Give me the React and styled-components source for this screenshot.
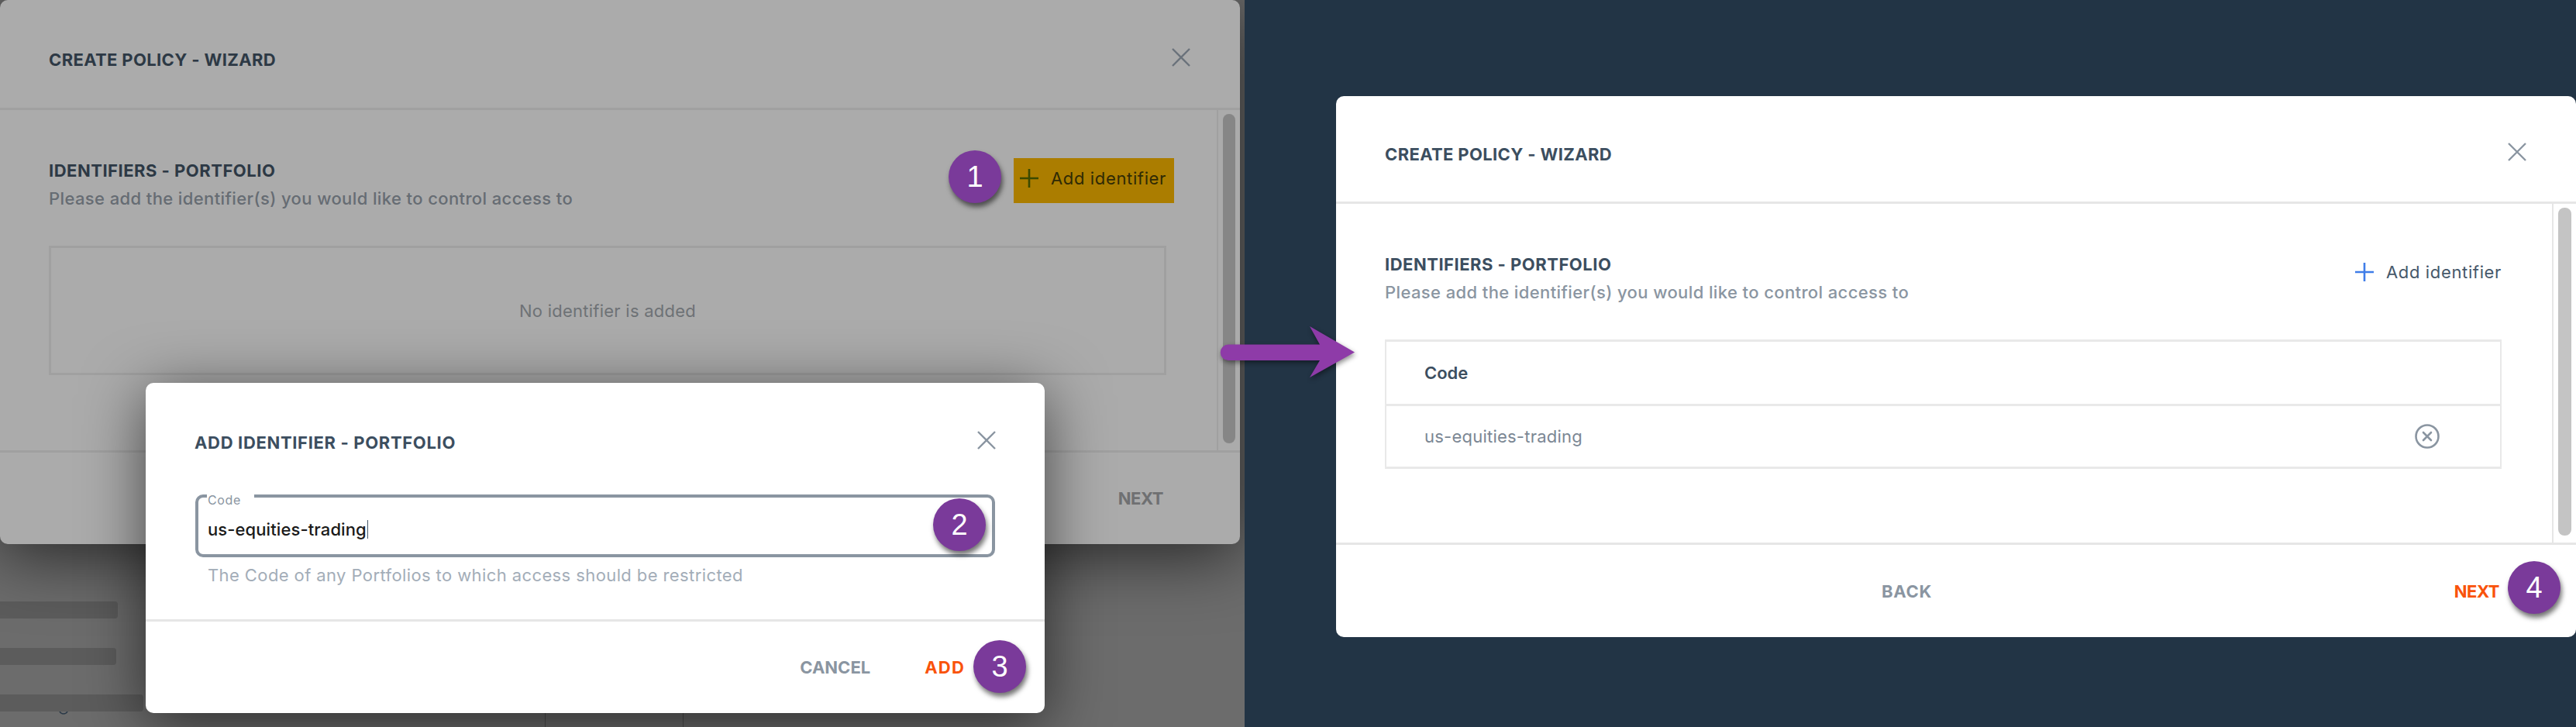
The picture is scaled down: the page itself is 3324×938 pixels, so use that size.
import styled, { createGlobalStyle } from 'styled-components'

const GlobalStyle = createGlobalStyle`
  html, body {
    margin: 0;
    overflow: hidden;
  }

  body {
    font-family: Inter, 'Open Sans', sans-serif;
  }
`

const Page = styled.div`
  display: flex;
  height: 938px;
  position: relative;
  width: 3324px;
`

const LeftPane = styled.div`
  background-color: #6c6c6c;
  flex: 0 0 1606px;
  overflow: hidden;
  position: relative;
`

const RightPane = styled.div`
  background-color: #223445;
  flex: 1;
  overflow: hidden;
  padding: 124px 0 0 118px;
`

const Wizard = styled.section`
  background-color: ${p => (p.$dim ? '#ababab' : '#fff')};
  border-radius: 10px;
  box-shadow: ${p => (p.$dim ? '0 10px 90px rgba(0, 0, 0, 0.7)' : 'none')};
  display: flex;
  flex-direction: column;
  height: ${p => (p.$dim ? '702px' : '698px')};
  position: relative;
  width: 1600px;
`

const Header = styled.header`
  align-items: center;
  border-bottom: 3px solid ${p => (p.$dim ? '#a0a0a0' : '#e6e6e6')};
  box-sizing: border-box;
  display: flex;
  flex: 0 0 ${p => p.$height}px;
  justify-content: space-between;
  padding: ${p => (p.$dim ? 9 : 8)}px 64px 0 63px;
`

const Title = styled.h2`
  color: ${p => (p.$dim ? '#2d3945' : '#3c4e5f')};
  font-size: 22px;
  font-weight: 700;
  letter-spacing: 0.36px;
  line-height: 28px;
  margin: 6px 0 0;
  white-space: nowrap;
`

const CloseMark = styled.svg`
  color: ${p => (p.$dim ? '#6a727b' : '#8a95a1')};
  display: block;
  flex: none;
  height: 24px;
  width: 24px;
`

const Body = styled.div`
  display: flex;
  flex: 1;
  min-height: 0;
`

const Content = styled.div`
  border-right: 2px solid ${p => (p.$dim ? '#a0a0a0' : '#e6e6e6')};
  box-sizing: border-box;
  flex: 0 0 ${p => (p.$dim ? 1572 : 1571)}px;
  padding: 64px 65px 0 63px;
`

const Track = styled.div`
  box-sizing: border-box;
  flex: 1;
  padding: 5px 6px 9px 6px;
`

const Thumb = styled.div`
  background-color: ${p => (p.$dim ? '#868686' : '#c4c4c4')};
  border-radius: 8px;
  height: 100%;
`

const SectionRow = styled.div`
  align-items: flex-start;
  display: flex;
  justify-content: space-between;
  margin-bottom: 47px;
`

const SectionTitle = styled.h3`
  color: ${p => (p.$dim ? '#2d3945' : '#3c4e5f')};
  font-size: 22px;
  font-weight: 700;
  letter-spacing: 0.5px;
  line-height: 28px;
  margin: 0 0 8px;
`

const SectionHint = styled.p`
  color: ${p => (p.$dim ? '#666c73' : '#8a95a1')};
  font-size: 22px;
  font-weight: 500;
  letter-spacing: 0.39px;
  line-height: 28px;
  margin: 0;
`

const AddButton = styled.button`
  align-items: center;
  background-color: ${p => (p.$highlight ? '#ab7d00' : 'transparent')};
  border: 0;
  box-sizing: border-box;
  color: ${p => (p.$highlight ? '#2f2a05' : '#46586a')};
  display: flex;
  font-family: inherit;
  font-size: 22px;
  font-weight: 400;
  gap: 16px;
  height: 58px;
  letter-spacing: 0.64px;
  margin: -2px -10px 0 0;
  padding: 0 10px 6px 8px;
  white-space: nowrap;

  svg {
    color: ${p => (p.$highlight ? '#3a4a00' : '#3f7de8')};
    display: block;
  }
`

const EmptyBox = styled.div`
  align-items: center;
  border: 3px solid #a0a0a0;
  box-sizing: border-box;
  color: #6e7276;
  display: flex;
  font-size: 22px;
  height: 167px;
  justify-content: center;
  letter-spacing: 0.25px;
`

const Table = styled.div`
  border: 3px solid #e9e9e9;
  border-width: 3px 2px;
  display: flex;
  flex-direction: column;
  font-size: 22px;
`

const TableRow = styled.div`
  align-items: center;
  box-sizing: border-box;
  border-top: ${p => (p.$head ? '0' : '3px solid #e9e9e9')};
  color: ${p => (p.$head ? '#3c4e5f' : '#7b8794')};
  display: flex;
  font-weight: ${p => (p.$head ? 600 : 400)};
  height: ${p => (p.$head ? 80 : 81)}px;
  justify-content: space-between;
  letter-spacing: ${p => (p.$head ? '0' : '0.23px')};
  padding: 0 76px 0 49px;

  svg {
    color: #8a95a1;
    display: block;
  }
`

const Footer = styled.footer`
  align-items: center;
  border-top: 3px solid ${p => (p.$dim ? '#a0a0a0' : '#e6e6e6')};
  box-sizing: border-box;
  display: flex;
  flex: 0 0 ${p => p.$height}px;
  justify-content: flex-end;
  padding: 0 99px 0 704px;
`

const Action = styled.span`
  color: ${p => p.$color};
  font-size: 22px;
  font-weight: 700;
  letter-spacing: ${p => p.$spacing}px;
  margin-right: ${p => (p.$push ? 'auto' : '0')};
  white-space: nowrap;
`

const Badge = styled.span`
  align-items: center;
  background-color: #7a3a9a;
  border-radius: 50%;
  box-shadow: 2px 5px 6px rgba(0, 0, 0, 0.55);
  color: #fff;
  display: flex;
  font-family: 'Liberation Sans', Arial, sans-serif;
  font-size: 38px;
  height: 68px;
  justify-content: center;
  left: ${p => p.$left}px;
  position: absolute;
  top: ${p => p.$top}px;
  width: 68px;
  z-index: 3;
`

const Dialog = styled.div`
  background-color: #fff;
  border-radius: 10px;
  box-shadow: 0 14px 80px rgba(0, 0, 0, 0.6);
  display: flex;
  flex-direction: column;
  height: 426px;
  left: 188px;
  position: absolute;
  top: 494px;
  width: 1160px;
  z-index: 2;
`

const DialogHeader = styled.header`
  align-items: center;
  box-sizing: border-box;
  display: flex;
  flex: 0 0 144px;
  justify-content: space-between;
  padding: 4px 63px 0 63px;
`

const DialogTitle = styled(Title)`
  color: #3c4e5f;
  letter-spacing: 0.66px;
`

const DialogBody = styled.div`
  flex: 1;
  padding: 0 64px;
`

const Field = styled.div`
  align-items: center;
  border: 4px solid #8a95a1;
  border-radius: 10px;
  box-sizing: border-box;
  color: #1a1a1a;
  display: flex;
  font-size: 22px;
  font-weight: 500;
  height: 81px;
  letter-spacing: 0.1px;
  padding: 8px 0 0 12px;
  position: relative;
`

const FieldLabel = styled.span`
  background-color: #fff;
  color: #8a95a1;
  font-size: 16px;
  font-weight: 400;
  left: 11px;
  letter-spacing: 0.6px;
  line-height: 16px;
  padding-left: 1px;
  position: absolute;
  top: -5px;
  width: 60px;
`

const Caret = styled.span`
  background-color: #46586a;
  display: inline-block;
  height: 24px;
  margin-left: 1px;
  width: 1px;
`

const FieldHelp = styled.p`
  color: #a3adb8;
  font-size: 22px;
  letter-spacing: 0.4px;
  line-height: 28px;
  margin: 9px 0 0 16px;
`

const DialogFooter = styled.footer`
  align-items: center;
  border-top: 3px solid #e6e6e6;
  box-sizing: border-box;
  display: flex;
  flex: 0 0 121px;
  gap: 70px;
  justify-content: flex-end;
  padding: 0 103px 0 0;
`

const BarStack = styled.div`
  display: flex;
  flex-direction: column;
  gap: 38px;
  padding-top: 74px;
`

const Bar = styled.div`
  background-color: #5c5c5c;
  border-radius: 0 4px 4px 0;
  height: 22px;
  width: ${p => p.$width}px;
`

const BottomStrip = styled.div`
  display: flex;
  height: 20px;
  padding-left: 76px;
`

const Descender = styled.svg`
  display: block;
  height: 4px;
  margin-right: 615px;
  width: 12px;
`

const StripCell = styled.div`
  border-left: 1px solid #4f4f4f;
  border-right: 1px solid #4f4f4f;
  width: 177px;
`

const ArrowMark = styled.svg`
  filter: drop-shadow(1px 3px 3px rgba(0, 0, 0, 0.45));
  height: 80px;
  left: 1570px;
  position: absolute;
  top: 415px;
  width: 185px;
  z-index: 4;
`

const Close = ({ dim }) => (
  <CloseMark $dim={dim} viewBox='0 0 24 24' fill='none' stroke='currentColor' strokeWidth='2.4'>
    <path d='M1 1 23 23M23 1 1 23' />
  </CloseMark>
)

const Plus = () => (
  <svg width='24' height='24' viewBox='0 0 24 24' fill='none' stroke='currentColor' strokeWidth='2.6'>
    <path d='M12 0v24M0 12h24' />
  </svg>
)

const RemoveIcon = () => (
  <svg width='36' height='36' viewBox='0 0 36 36' fill='none' stroke='currentColor' strokeWidth='2.6'>
    <circle cx='18' cy='18' r='14.5' />
    <path d='M13 13 23 23M23 13 13 23' strokeLinecap='round' />
  </svg>
)

const Arrow = () => (
  <ArrowMark viewBox='1570 415 185 80'>
    <path
      d='M1585 444.5 L1703 444.5 L1690 421 L1748 454.5 L1690 487 L1703 465 L1585 465 A10 10 0 0 1 1585 444.5 Z'
      fill='#8e3ba8'
    />
  </ArrowMark>
)

const App = () => (
  <>
    <GlobalStyle />
    <Page>
      <LeftPane>
        <Wizard $dim>
          <Header $dim $height={142}>
            <Title $dim>CREATE POLICY - WIZARD</Title>
            <Close dim />
          </Header>
          <Body>
            <Content $dim>
              <SectionRow>
                <div>
                  <SectionTitle $dim>IDENTIFIERS - PORTFOLIO</SectionTitle>
                  <SectionHint $dim>Please add the identifier(s) you would like to control access to</SectionHint>
                </div>
                <AddButton $highlight>
                  <Plus />
                  Add identifier
                </AddButton>
              </SectionRow>
              <EmptyBox>No identifier is added</EmptyBox>
            </Content>
            <Track>
              <Thumb $dim />
            </Track>
          </Body>
          <Footer $dim $height={121}>
            <Action $color='#6f7072' $spacing={-0.5}>NEXT</Action>
          </Footer>
          <Badge $left={1224} $top={194}>1</Badge>
        </Wizard>
        <BarStack>
          <Bar $width={152} />
          <Bar $width={150} />
          <Bar $width={185} />
        </BarStack>
        <BottomStrip>
          <Descender viewBox='0 0 12 4' fill='none' stroke='#2b3a48' strokeWidth='1.6'>
            <path d='M1 0C3 4 9 4 11 0' />
          </Descender>
          <StripCell />
        </BottomStrip>
        <Dialog>
          <DialogHeader>
            <DialogTitle>ADD IDENTIFIER - PORTFOLIO</DialogTitle>
            <Close />
          </DialogHeader>
          <DialogBody>
            <Field>
              <FieldLabel>Code</FieldLabel>
              us-equities-trading
              <Caret />
            </Field>
            <FieldHelp>The Code of any Portfolios to which access should be restricted</FieldHelp>
          </DialogBody>
          <DialogFooter>
            <Action $color='#8a95a1' $spacing={0}>CANCEL</Action>
            <Action $color='#f9530b' $spacing={1.2}>ADD</Action>
          </DialogFooter>
          <Badge $left={1016} $top={149}>2</Badge>
          <Badge $left={1068} $top={332}>3</Badge>
        </Dialog>
      </LeftPane>
      <RightPane>
        <Wizard>
          <Header $height={139}>
            <Title>CREATE POLICY - WIZARD</Title>
            <Close />
          </Header>
          <Body>
            <Content>
              <SectionRow>
                <div>
                  <SectionTitle>IDENTIFIERS - PORTFOLIO</SectionTitle>
                  <SectionHint>Please add the identifier(s) you would like to control access to</SectionHint>
                </div>
                <AddButton>
                  <Plus />
                  Add identifier
                </AddButton>
              </SectionRow>
              <Table>
                <TableRow $head>Code</TableRow>
                <TableRow>
                  us-equities-trading
                  <RemoveIcon />
                </TableRow>
              </Table>
            </Content>
            <Track>
              <Thumb />
            </Track>
          </Body>
          <Footer $height={122}>
            <Action $color='#8a95a1' $spacing={0.7} $push>BACK</Action>
            <Action $color='#f9530b' $spacing={-0.5}>NEXT</Action>
          </Footer>
          <Badge $left={1512} $top={600}>4</Badge>
        </Wizard>
      </RightPane>
      <Arrow />
    </Page>
  </>
)

export default App
